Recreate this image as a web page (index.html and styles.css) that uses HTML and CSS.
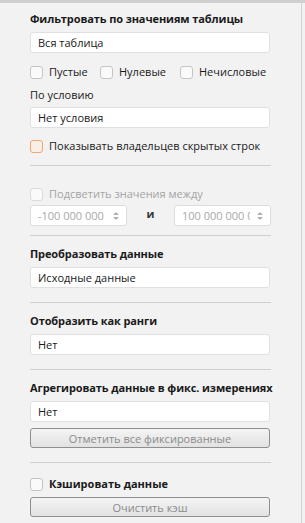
FILE: index.html
```html
<!DOCTYPE html>
<html lang="ru">
<head>
    <meta charset="UTF-8">
    <title>Фильтры</title>
    <link rel="stylesheet" href="styles.css">
</head>
<body>
    <div class="panel">
        <!-- Фильтр -->
        <section class="group group-filter">
            <h3 class="title">Фильтровать по значениям таблицы</h3>
            <div class="field">Вся таблица</div>
            <div class="checks">
                <label class="check"><span class="box"></span>Пустые</label>
                <label class="check"><span class="box"></span>Нулевые</label>
                <label class="check"><span class="box"></span>Нечисловые</label>
            </div>
            <div class="label">По условию</div>
            <div class="field">Нет условия</div>
            <label class="check check-owners"><span class="box box-focus"></span>Показывать владельцев скрытых строк</label>
        </section>

        <!-- Подсветка -->
        <section class="group group-highlight">
            <label class="check check-disabled"><span class="box"></span>Подсветить значения между</label>
            <div class="range">
                <div class="spin">
                    <span class="spin-value">-100 000 000</span>
                    <span class="arrows"><i class="up"></i><i class="down"></i></span>
                </div>
                <span class="and">и</span>
                <div class="spin">
                    <span class="spin-value">100 000 000 0</span>
                    <span class="arrows"><i class="up"></i><i class="down"></i></span>
                </div>
            </div>
        </section>

        <section class="group">
            <h3 class="title">Преобразовать данные</h3>
            <div class="field">Исходные данные</div>
        </section>

        <section class="group">
            <h3 class="title">Отобразить как ранги</h3>
            <div class="field">Нет</div>
        </section>

        <section class="group">
            <h3 class="title">Агрегировать данные в фикс. измерениях</h3>
            <div class="field">Нет</div>
            <button class="btn">Отметить все фиксированные</button>
        </section>

        <section class="group group-last">
            <label class="check check-bold"><span class="box"></span>Кэшировать данные</label>
            <button class="btn">Очистить кэш</button>
        </section>
    </div>
</body>
</html>
```

FILE: styles.css
```css
html, body {
    margin: 0;
    padding: 0;
    background-color: #f2f2f2;
}

body {
    font-family: "Open Sans", "Noto Sans", sans-serif;
    font-size: 11px;
    color: #1a1a1a;
    height: 523px;
    box-sizing: border-box;
    border-top: 3px solid #cfcfcf;
}

.panel {
    width: 302px;
    height: 520px;
    border-right: 1px solid #d4d4d4;
    padding: 9px 30px 0 30px;
    box-sizing: border-box;
}

.group {
    display: flex;
    flex-direction: column;
    width: 241px;
    border-bottom: 1px solid #cfcfcf;
    padding-bottom: 14px;
    margin-bottom: 11px;
}

.group-filter {
    padding-bottom: 11px;
}

.group-highlight {
    padding-bottom: 9px;
}

.group-last {
    border-bottom: none;
}

.title {
    margin: 0 0 6px 0;
    font-size: 11px;
    font-weight: 700;
    line-height: 14px;
    white-space: nowrap;
    letter-spacing: -0.1px;
}

.label {
    margin: 8px 0 5px 0;
    line-height: 14px;
}

.field {
    height: 21px;
    line-height: 19px;
    background: #fff;
    border: 1px solid #e0e0e0;
    border-radius: 3px;
    padding: 0 7px;
    box-sizing: border-box;
    width: 240px;
}

.checks {
    display: grid;
    grid-template-columns: 70px 80px auto;
    margin-top: 11px;
}

.check {
    display: flex;
    align-items: center;
    gap: 6px;
    height: 16px;
    line-height: 16px;
    white-space: nowrap;
}

.check-owners {
    margin-top: 10px;
}

.box {
    width: 11px;
    height: 11px;
    flex: none;
    border: 1px solid #c4c4c4;
    border-radius: 3px;
    background: #fafafa;
}

.box-focus {
    border-color: #f0a873;
    background: #fbeee4;
}

.check-disabled {
    color: #a4a4a4;
    margin-top: 9px;
}

.check-disabled .box {
    border-color: #dadada;
}

.check-bold {
    font-weight: 700;
    margin-top: 2px;
}

.range {
    display: flex;
    align-items: center;
    justify-content: space-between;
    margin-top: 3px;
}

.spin {
    width: 97px;
    height: 21px;
    border: 1px solid #dcdcdc;
    border-radius: 3px;
    background: #fff;
    box-sizing: border-box;
    display: flex;
    align-items: center;
    padding: 0 0 0 7px;
    color: #a8a8a8;
    overflow: hidden;
}

.spin-value {
    flex: 1;
    white-space: nowrap;
    overflow: hidden;
}

.arrows {
    width: 20px;
    display: flex;
    flex-direction: column;
    align-items: center;
    gap: 2px;
}

.arrows i {
    width: 0;
    height: 0;
    border-left: 3px solid transparent;
    border-right: 3px solid transparent;
}

.arrows .up {
    border-bottom: 3px solid #b0b0b0;
}

.arrows .down {
    border-top: 3px solid #b0b0b0;
}

.and {
    font-weight: 700;
    color: #333;
    margin-top: -4px;
}

.btn {
    margin-top: 6px;
    height: 20px;
    width: 240px;
    font: inherit;
    color: #8a8a8a;
    background: linear-gradient(#f4f4f4, #e2e2e2);
    border: 1px solid #8e8e8e;
    border-radius: 3px;
    padding: 0;
}

.group-last .btn {
    margin-top: 5px;
}
```
